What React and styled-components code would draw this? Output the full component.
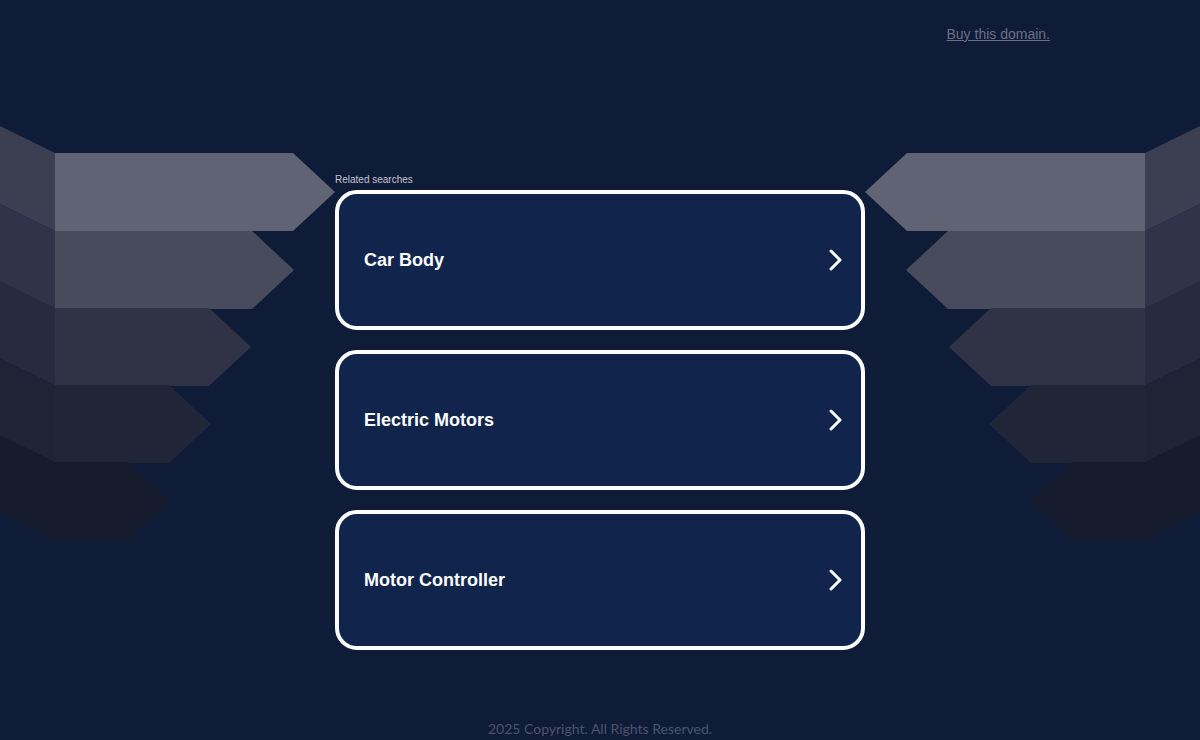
import React from 'react';
import styled, { createGlobalStyle } from 'styled-components';

const GlobalStyle = createGlobalStyle`
  html, body {
    margin: 0;
    padding: 0;
    background-color: #0f1c38;
  }
  * {
    box-sizing: border-box;
  }
`;

const Page = styled.div`
  position: relative;
  width: 100%;
  height: 740px;
  overflow: hidden;
  background-color: #0f1c38;
  display: flex;
  flex-direction: column;
  align-items: center;
  font-family: 'Liberation Sans', Arial, sans-serif;
`;

const Backdrop = styled.svg`
  position: absolute;
  top: 0;
  left: 0;
  width: 1200px;
  height: 740px;
  z-index: 0;
`;

const Header = styled.div`
  position: relative;
  z-index: 1;
  width: 100%;
  display: flex;
  justify-content: flex-end;
  padding: 26px 150px 0 0;
  height: 174px;
`;

const BuyLink = styled.a`
  color: #6c7084;
  font-size: 14px;
  text-decoration: underline;
  cursor: pointer;
`;

const Content = styled.div`
  position: relative;
  z-index: 1;
  width: 530px;
  display: flex;
  flex-direction: column;
`;

const Label = styled.div`
  color: #c3c6d0;
  font-size: 10px;
  line-height: 12px;
  margin-bottom: 4px;
`;

const List = styled.div`
  display: flex;
  flex-direction: column;
  gap: 20px;
`;

const Card = styled.a`
  height: 140px;
  border: 4px solid #ffffff;
  border-radius: 22px;
  background-color: #11254c;
  display: flex;
  align-items: center;
  justify-content: space-between;
  padding: 0 18px 0 25px;
  color: #ffffff;
  cursor: pointer;
`;

const Title = styled.span`
  font-size: 18px;
  font-weight: bold;
`;

const Footer = styled.div`
  position: relative;
  z-index: 1;
  margin-top: auto;
  padding-bottom: 3px;
  color: #4d546b;
  font-family: Lato, 'Open Sans', sans-serif;
  font-size: 14px;
`;

const Chevron = () => (
  <svg width="16" height="22" viewBox="0 0 16 22">
    <path d="M4 2 L13 11 L4 20" fill="none" stroke="#ffffff" strokeWidth="3" strokeLinecap="round" strokeLinejoin="round" />
  </svg>
);

const rows = [
  { y: 153, end: 293, face: '#5f6373', wing: '#3c3f51' },
  { y: 231, end: 252, face: '#474b5c', wing: '#30344a' },
  { y: 308, end: 209, face: '#2f3345', wing: '#272b3f' },
  { y: 385, end: 169, face: '#212538', wing: '#1e2336' },
  { y: 462, end: 128, face: '#151a2c', wing: '#161b2e' },
];

const Arrows = () => (
  <Backdrop viewBox="0 0 1200 740">
    {rows.map((r, i) => {
      const h = 78;
      const mid = r.y + h / 2;
      const tip = r.end + 42;
      return (
        <g key={i}>
          <polygon points={`0,${r.y - 27} 55,${r.y} 55,${r.y + h} 0,${r.y + h - 27}`} fill={r.wing} />
          <polygon points={`55,${r.y} ${r.end},${r.y} ${tip},${mid} ${r.end},${r.y + h} 55,${r.y + h}`} fill={r.face} />
          <polygon points={`1200,${r.y - 27} 1145,${r.y} 1145,${r.y + h} 1200,${r.y + h - 27}`} fill={r.wing} />
          <polygon points={`1145,${r.y} ${1200 - r.end},${r.y} ${1200 - tip},${mid} ${1200 - r.end},${r.y + h} 1145,${r.y + h}`} fill={r.face} />
        </g>
      );
    })}
  </Backdrop>
);

const searches = ['Car Body', 'Electric Motors', 'Motor Controller'];

export default function App() {
  return (
    <>
      <GlobalStyle />
      <Page>
        <Arrows />
        <Header>
          <BuyLink>Buy this domain.</BuyLink>
        </Header>
        <Content>
          <Label>Related searches</Label>
          <List>
            {searches.map((s) => (
              <Card key={s}>
                <Title>{s}</Title>
                <Chevron />
              </Card>
            ))}
          </List>
        </Content>
        <Footer>2025 Copyright. All Rights Reserved.</Footer>
      </Page>
    </>
  );
}
